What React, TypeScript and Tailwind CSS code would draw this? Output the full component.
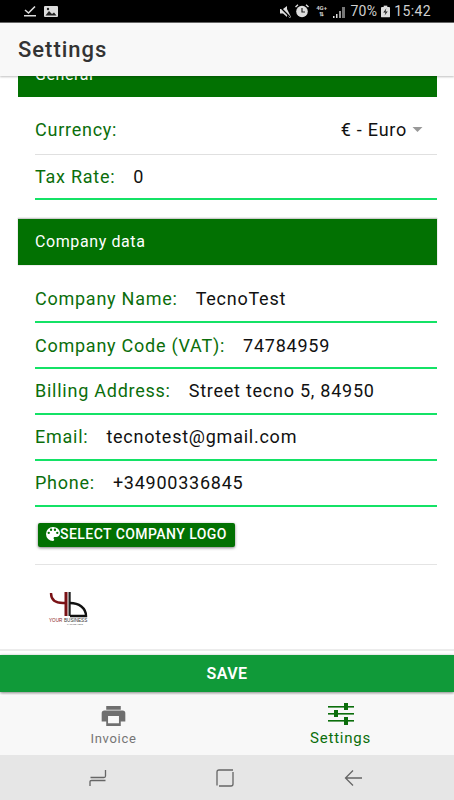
import React from "react";

function Row({ label, value, h, pt = "pt-0" }: { label: string; value: string; h: string; pt?: string }) {
  return (
    <div className={`ml-[35px] flex items-center border-b-2 border-[#14e266] ${h} ${pt}`}>
      <span className="text-[#0b6e0b]">{label}</span>
      <span className="ml-[18px] text-[#111]">{value}</span>
    </div>
  );
}

function Logo() {
  return (
    <svg width="44" height="36" viewBox="0 0 44 36" className="block" style={{ letterSpacing: 0 }}>
      <path d="M3 1 C3 8 8 11 15 11 L18 11" fill="none" stroke="#7a1216" strokeWidth="2.4" />
      <rect x="16.5" y="0" width="3" height="24" fill="#7a1216" />
      <rect x="20.5" y="0" width="2.2" height="24" fill="#222" />
      <path d="M22 11 C31 11 38 16 38 24 L22 24" fill="none" stroke="#111" strokeWidth="2.4" />
      <text x="1" y="29.5" fontSize="4.6" fontFamily="Liberation Sans, sans-serif" fill="#8a1a1a">YOUR</text>
      <text x="16" y="29.5" fontSize="4.6" fontFamily="Liberation Sans, sans-serif" fill="#333">BUSINESS</text>
      <text x="19" y="33" fontSize="2.2" fontFamily="Liberation Sans, sans-serif" fill="#555">TAGLINE HERE</text>
    </svg>
  );
}

export default function App() {
  return (
    <div className="flex h-[800px] w-[454px] flex-col overflow-hidden bg-white font-['Roboto',sans-serif] text-[18px] tracking-[0.75px]">
      {/* Status bar */}
      <div className="flex h-[22px] shrink-0 items-center justify-between bg-black pl-[24px] pr-[23px] text-[#cfcfcf]">
        <div className="flex items-center gap-[8px]">
          <svg width="12" height="12" viewBox="0 0 12 12">
            <path d="M1 5 L4.5 8 L11 1.5" fill="none" stroke="#ddd" strokeWidth="1.6" />
            <rect x="0" y="10" width="12" height="1.5" fill="#ddd" />
          </svg>
          <svg width="14" height="11" viewBox="0 0 14 11">
            <rect width="14" height="11" rx="1" fill="#ddd" />
            <path d="M1.5 9.5 L5 5 L8 8 L10 6.5 L12.5 9.5 Z" fill="#222" />
            <circle cx="4" cy="3" r="1.2" fill="#222" />
          </svg>
        </div>
        <div className="flex items-center">
          <svg width="14" height="13" viewBox="0 0 14 13" className="mr-[3px]">
            <path d="M2 4 H5 L9 1 V4 L13 12 L11.5 13 L9 9.5 V12 L5 8.5 H2 Z" fill="#ddd" />
            <path d="M1 1 L12 12" stroke="#000" strokeWidth="1.2" />
          </svg>
          <svg width="14" height="14" viewBox="0 0 14 14" className="mr-[6px]">
            <circle cx="7" cy="7.5" r="5.8" fill="#ddd" />
            <path d="M7 4 V8 H10" fill="none" stroke="#222" strokeWidth="1.2" />
            <path d="M0.5 3 L3 0.8 M13.5 3 L11 0.8" stroke="#ddd" strokeWidth="1.4" />
          </svg>
          <span className="mr-[4px] flex w-[14px] flex-col items-center text-[6px] font-bold leading-[6px] tracking-normal text-[#ccc]">
            <span>4G+</span>
            <span>⇅</span>
          </span>
          <svg width="13" height="13" viewBox="0 0 13 13" className="mr-[5px]">
            <rect x="0" y="11" width="1.5" height="2" fill="#ddd" />
            <rect x="3" y="9" width="1.5" height="4" fill="#ddd" />
            <rect x="6" y="6" width="2" height="7" fill="#999" />
            <rect x="9" y="2" width="3" height="11" fill="#777" />
          </svg>
          <span className="text-[14px] leading-none tracking-[0.2px]">70%</span>
          <svg width="9" height="13" viewBox="0 0 10 13" className="ml-[4px] mr-[4px]">
            <rect x="3" y="0" width="4" height="2" fill="#ddd" />
            <rect x="0" y="1.5" width="10" height="11.5" rx="1" fill="#ddd" />
            <path d="M6 3 L2.5 7.5 H5 L4 11 L7.5 6.5 H5 Z" fill="#222" />
          </svg>
          <span className="text-[14px] leading-none tracking-[0.4px]">15:42</span>
        </div>
      </div>

      {/* Header */}
      <div className="relative z-10 flex h-[54px] shrink-0 items-center border-t border-[#666] bg-[#f8f8f8] pl-[18px] text-[22px] font-medium tracking-[1px] text-[#333] shadow-[0_1px_2px_rgba(0,0,0,0.25)]">
        Settings
      </div>

      {/* Content */}
      <div className="relative h-[575px] shrink-0 overflow-hidden">
        <div className="-mt-[24px]">
          <div className="ml-[18px] mr-[17px] flex h-[45px] items-center bg-[#027102] pl-[17px] text-[16px] tracking-[0.6px] text-white">General</div>
          <div className="ml-[35px] mr-[17px] flex h-[58px] items-center justify-between border-b border-[#e0e0e0] pt-[8px]">
            <span className="text-[#0b6e0b]">Currency:</span>
            <span className="flex items-center pr-[14px] text-[#111]">
              € - Euro
              <svg width="11" height="5" viewBox="0 0 10 5" className="ml-[5px]">
                <path d="M0 0 H10 L5 5 Z" fill="#999" />
              </svg>
            </span>
          </div>
          <div className="mr-[17px]">
            <Row label="Tax Rate:" value="0" h="h-[45px]" />
          </div>

          <div className="ml-[18px] mr-[17px] mt-[18px] flex h-[47px] items-center border-t border-[#ccc] bg-[#027102] pl-[17px] text-[16px] tracking-[0.6px] text-white shadow-[0_0_1px_rgba(0,0,0,0.4)]">
            Company data
          </div>
          <div className="mr-[17px]">
            <Row label="Company Name:" value="TecnoTest" h="h-[58px]" pt="pt-[10px]" />
            <Row label="Company Code (VAT):" value="74784959" h="h-[46px]" />
            <Row label="Billing Address:" value="Street tecno 5, 84950" h="h-[46px]" pt="pb-[1px]" />
            <Row label="Email:" value="tecnotest@gmail.com" h="h-[46px]" pt="pb-[1px]" />
            <Row label="Phone:" value="+34900336845" h="h-[46px]" pt="pb-[1px]" />
          </div>

          <div className="ml-[35px] mr-[17px] h-[58px] border-b border-[#e4e4e4] pl-[3px] pt-[16px]">
            <div className="flex h-[24px] w-[197px] items-center rounded-[2px] bg-[#027102] pl-[8px] pb-[2px] text-[14px] font-medium tracking-[0.45px] text-white shadow-[0_1px_3px_rgba(0,0,0,0.5)]">
              <svg width="14" height="14" viewBox="3 3 18 18" className="shrink-0">
                <path
                  fill="#fff"
                  d="M12 3a9 9 0 0 0 0 18c.83 0 1.5-.67 1.5-1.5 0-.39-.15-.74-.39-1.01-.23-.26-.38-.61-.38-.99 0-.83.67-1.5 1.5-1.5H16c2.76 0 5-2.24 5-5 0-4.42-4.03-8-9-8zm-5.5 9a1.5 1.5 0 1 1 0-3 1.5 1.5 0 0 1 0 3zm3-4a1.5 1.5 0 1 1 0-3 1.5 1.5 0 0 1 0 3zm5 0a1.5 1.5 0 1 1 0-3 1.5 1.5 0 0 1 0 3zm3 4a1.5 1.5 0 1 1 0-3 1.5 1.5 0 0 1 0 3z"
                />
              </svg>
              <span>SELECT COMPANY LOGO</span>
            </div>
          </div>
          <div className="ml-[48px] mt-[27px]">
            <Logo />
          </div>
        </div>
        <div className="absolute bottom-0 left-0 right-0 h-[2px] bg-[#ececec]" />
      </div>

      {/* Save */}
      <div className="mt-[4px] flex h-[37px] shrink-0 items-center justify-center bg-[#109a39] text-[16px] font-semibold tracking-[0.5px] text-white shadow-[0_1px_3px_rgba(0,0,0,0.5)]">
        SAVE
      </div>

      {/* Tabs */}
      <div className="mt-[4px] grid h-[59px] shrink-0 grid-cols-2 bg-[#f8f8f8]">
        <div className="flex flex-col items-center pt-[10px] text-[13px] leading-[20px] tracking-[0.7px] text-[#757575]">
          <svg width="25" height="20" viewBox="0 0 26 22">
            <path fill="#6f6f6f" d="M5 0 H21 V4 H5 Z M3 5 H23 A3 3 0 0 1 26 8 V17 H21 V22 H5 V17 H0 V8 A3 3 0 0 1 3 5 Z" />
            <rect x="7" y="11" width="12" height="8" fill="#f8f8f8" />
          </svg>
          <span className="mt-[3px]">Invoice</span>
        </div>
        <div className="flex flex-col items-center pt-[7px] text-[15px] leading-[20px] tracking-[0.75px] text-[#0b6e0b]">
          <svg width="26" height="22" viewBox="0 0 26 22" fill="#0b6e0b">
            <rect x="0" y="3" width="26" height="1.6" />
            <rect x="16" y="0" width="4" height="7" />
            <rect x="0" y="10" width="26" height="1.6" />
            <rect x="6" y="7" width="4" height="7" />
            <rect x="0" y="17" width="26" height="1.6" />
            <rect x="16" y="14" width="4" height="8" />
          </svg>
          <span className="mt-[3px]">Settings</span>
        </div>
      </div>

      {/* Nav bar */}
      <div className="flex h-[45px] shrink-0 items-center bg-[#e6e6e6]">
        <div className="flex w-full">
          <svg width="18" height="18" viewBox="0 0 18 18" className="ml-[89px]" fill="none" stroke="#666" strokeWidth="1.3">
            <path d="M16.5 1 V7 Q16.5 8.5 15 8.5 H1.5" />
            <path d="M1 17 V12.5 Q1 11.5 2.5 11.5 H16.5" />
          </svg>
          <svg width="18" height="18" viewBox="0 0 18 18" className="ml-[109px]" fill="none" stroke="#666" strokeWidth="1.3">
            <path d="M1 16.5 V3 Q1 1 3 1 H17" />
            <path d="M17 3 V15 Q17 17 15 17 H3" />
          </svg>
          <svg width="18" height="18" viewBox="0 0 18 18" className="ml-[110px]" fill="none" stroke="#666" strokeWidth="1.3">
            <path d="M9 1.5 L1.5 9 L9 16.5 M1.5 9 H18" />
          </svg>
        </div>
      </div>
    </div>
  );
}
